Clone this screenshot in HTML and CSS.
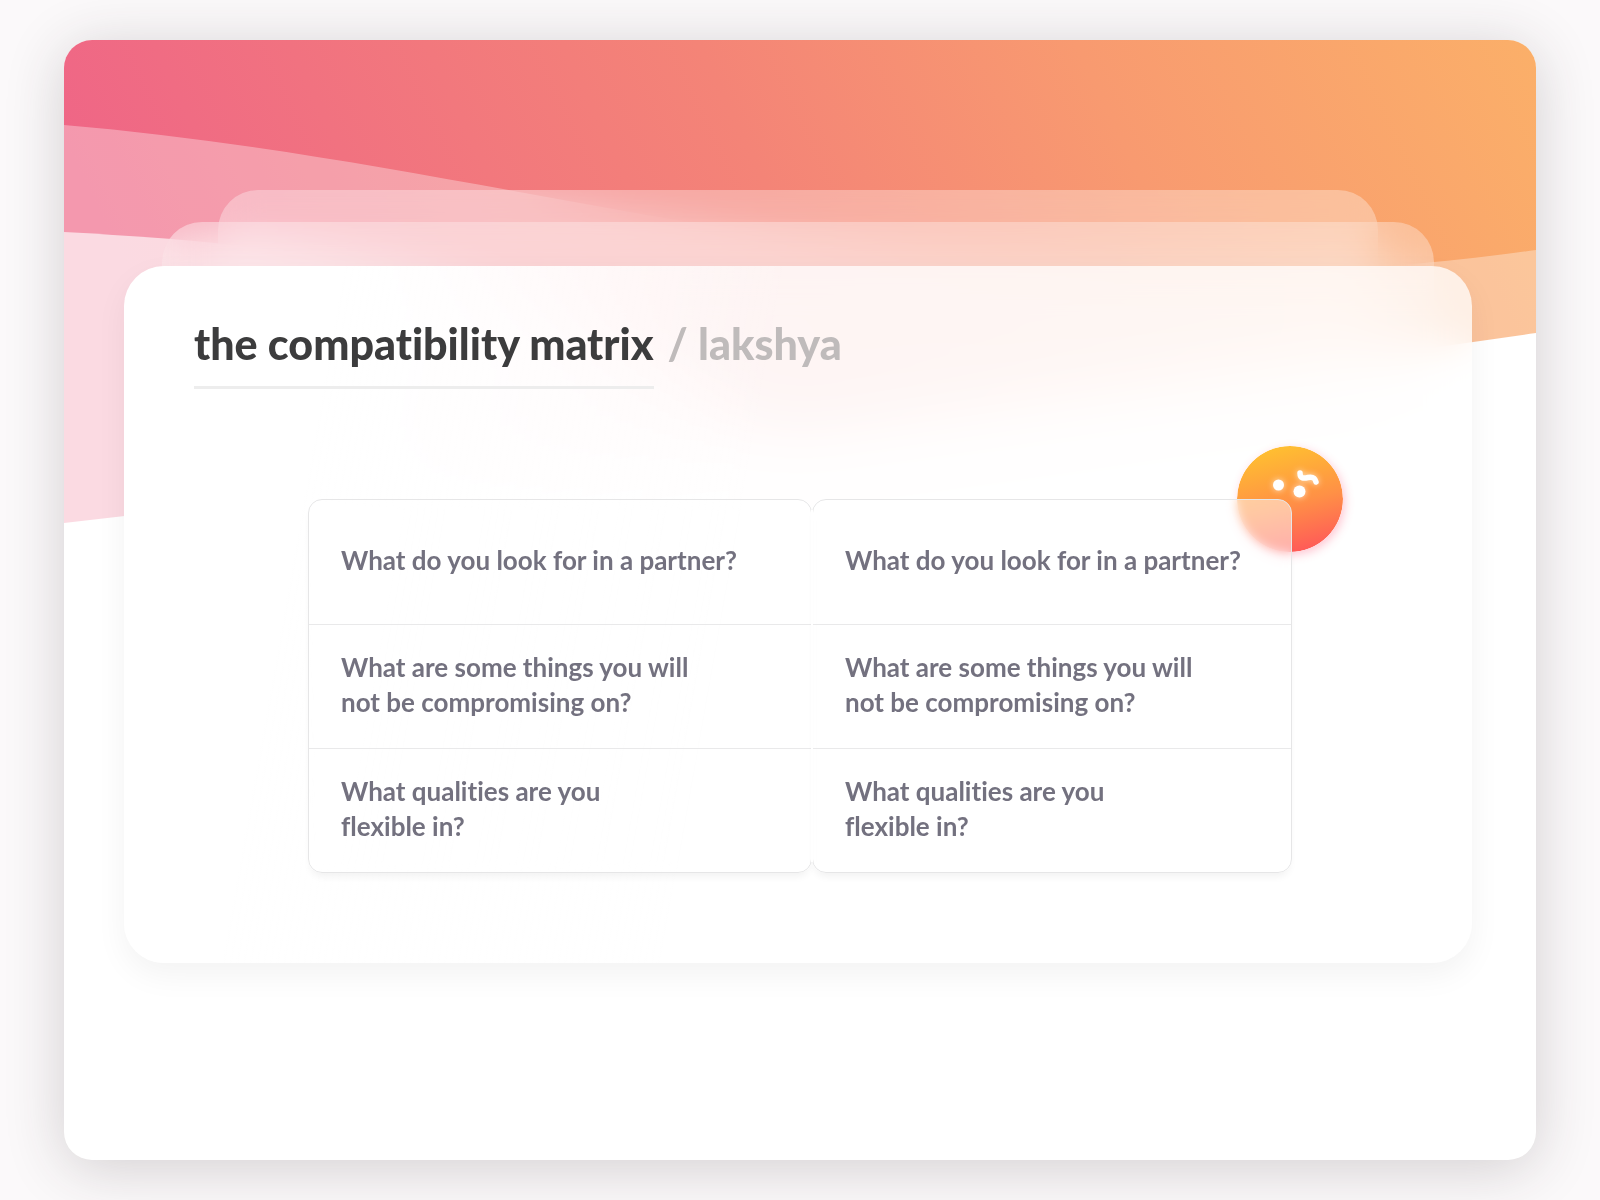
FILE: index.html
```
<!DOCTYPE html>
<html lang="en">
<head>
    <meta charset="UTF-8">
    <meta name="viewport" content="width=device-width, initial-scale=1.0">
    <title>The Compatibility Matrix</title>
    <link rel="stylesheet" href="styles.css">
</head>
<body>
    <div class="frame">
        <svg class="hero" viewBox="0 0 1472 490" preserveAspectRatio="none" aria-hidden="true">
            <defs>
                <linearGradient id="sunset" gradientUnits="userSpaceOnUse" x1="0" y1="100" x2="1231" y2="-488">
                    <stop offset="0" stop-color="#ef6686" />
                    <stop offset="0.45" stop-color="#f48477" />
                    <stop offset="0.7" stop-color="#f89a70" />
                    <stop offset="1" stop-color="#fbaf69" />
                </linearGradient>
            </defs>
            <path fill="url(#sunset)" d="M0 0H1472V293Q740 398 0 483Z" />
            <path fill="#fff" fill-opacity="0.33" d="M0 85C490 127 880 292 1472 210V490H0Z" />
            <path fill="#fff" fill-opacity="0.64" d="M0 192C150 200 300 215 400 250S640 340 720 394V490H0Z" />
        </svg>

        <main class="deck">
            <div class="layer layer-back"></div>
            <div class="layer layer-middle"></div>
            <section class="layer card">
                <h1 class="title">
                    <span class="title-name">the compatibility matrix</span>
                    <span class="title-user">/ lakshya</span>
                </h1>

                <div class="questions">
                    <svg class="face" viewBox="0 0 106 106" aria-hidden="true">
                        <defs>
                            <linearGradient id="skin" x1="0.35" y1="0" x2="0.6" y2="1">
                                <stop offset="0" stop-color="#ffc030" />
                                <stop offset="0.55" stop-color="#ff9046" />
                                <stop offset="1" stop-color="#ff5a58" />
                            </linearGradient>
                        </defs>
                        <circle cx="53" cy="53" r="53" fill="url(#skin)" />
                        <g class="face-glow">
                            <circle cx="41.5" cy="39" r="5.5" fill="#fff" />
                            <circle cx="62.5" cy="45.5" r="6" fill="#fff" />
                            <path d="M63 27C63 33 67 32.5 71 31.5C76 30.5 78 32 79 36" fill="none" stroke="#fff" stroke-width="5.5" stroke-linecap="round" />
                        </g>
                    </svg>
                    <ul class="panel">
                        <li>What do you look for in a partner?</li>
                        <li>What are some things you will<br>not be compromising on?</li>
                        <li>What qualities are you<br>flexible in?</li>
                    </ul>
                    <ul class="panel">
                        <li>What do you look for in a partner?</li>
                        <li>What are some things you will<br>not be compromising on?</li>
                        <li>What qualities are you<br>flexible in?</li>
                    </ul>
                </div>
            </section>
        </main>
    </div>
</body>
</html>
```
FILE: styles.css
```
* {
  box-sizing: border-box;
}

body {
  margin: 0;
  padding: 40px 64px;
  font-family: "Lato", sans-serif;
  font-variant-ligatures: none;
  color: #73717f;
  background-color: #fbf9fa;
}

.frame {
  position: relative;
  min-height: calc(100vh - 80px);
  padding: 150px 64px 80px 60px;
  overflow: hidden;
  background-color: #fff;
  border-radius: 28px;
  box-shadow: 0 8px 60px rgba(50, 40, 45, 0.2);
}

.hero {
  position: absolute;
  top: 0;
  left: 0;
  width: 100%;
  height: 490px;
}

.deck {
  display: grid;
}

.layer {
  position: relative;
  grid-area: 1 / 1;
  border-radius: 40px;
  backdrop-filter: blur(20px);
}

.layer-back {
  margin: 0 94px 400px;
  background-color: rgba(255, 255, 255, 0.32);
}

.layer-middle {
  margin: 32px 38px 200px;
  background-color: rgba(255, 250, 248, 0.32);
}

.card {
  margin-top: 76px;
  padding: 54px 0 90px;
  background-image: linear-gradient(100deg, #fff 15%, rgba(255, 255, 255, 0.74) 45%);
  box-shadow: 0 12px 32px rgba(0, 0, 0, 0.05);
}

.title {
  display: flex;
  flex-wrap: wrap;
  align-items: flex-start;
  gap: 14px;
  margin: 0 70px;
  font-size: 43px;
  line-height: 48px;
  font-weight: 900;
}

.title-name {
  padding-bottom: 18px;
  border-bottom: 3px solid #ededed;
  color: #3c3c3d;
}

.title-user {
  color: #bfbbbb;
}

.questions {
  position: relative;
  display: grid;
  grid-template-columns: 21fr 20fr;
  margin: 110px 180px 0 184px;
}

.face {
  position: absolute;
  top: -53px;
  right: -51px;
  width: 106px;
  height: 106px;
  border-radius: 50%;
  box-shadow: 2px 3px 10px rgba(255, 70, 110, 0.3);
}

.face-glow {
  filter: drop-shadow(0 0 3px rgba(255, 255, 255, 0.7));
}

.panel {
  position: relative;
  margin: 0;
  padding: 0;
  list-style: none;
  border: 1px solid #e6e6e7;
  border-radius: 14px;
  background-color: rgba(255, 255, 255, 0.5);
  box-shadow: 0 6px 8px -3px rgba(0, 0, 0, 0.06);
  backdrop-filter: blur(5px);
}

/* hides the straight part of the seam, the rounded corners stay */
.panel + .panel::before {
  content: "";
  position: absolute;
  top: 10px;
  bottom: 10px;
  left: -2px;
  width: 2px;
  background-color: #fff;
}

.panel li {
  display: flex;
  align-items: center;
  min-height: 124px;
  padding: 0 32px 4px;
  font-size: 26px;
  line-height: 35px;
  font-weight: bold;
}

.panel li + li {
  border-top: 1px solid #e9e9ea;
}
```
